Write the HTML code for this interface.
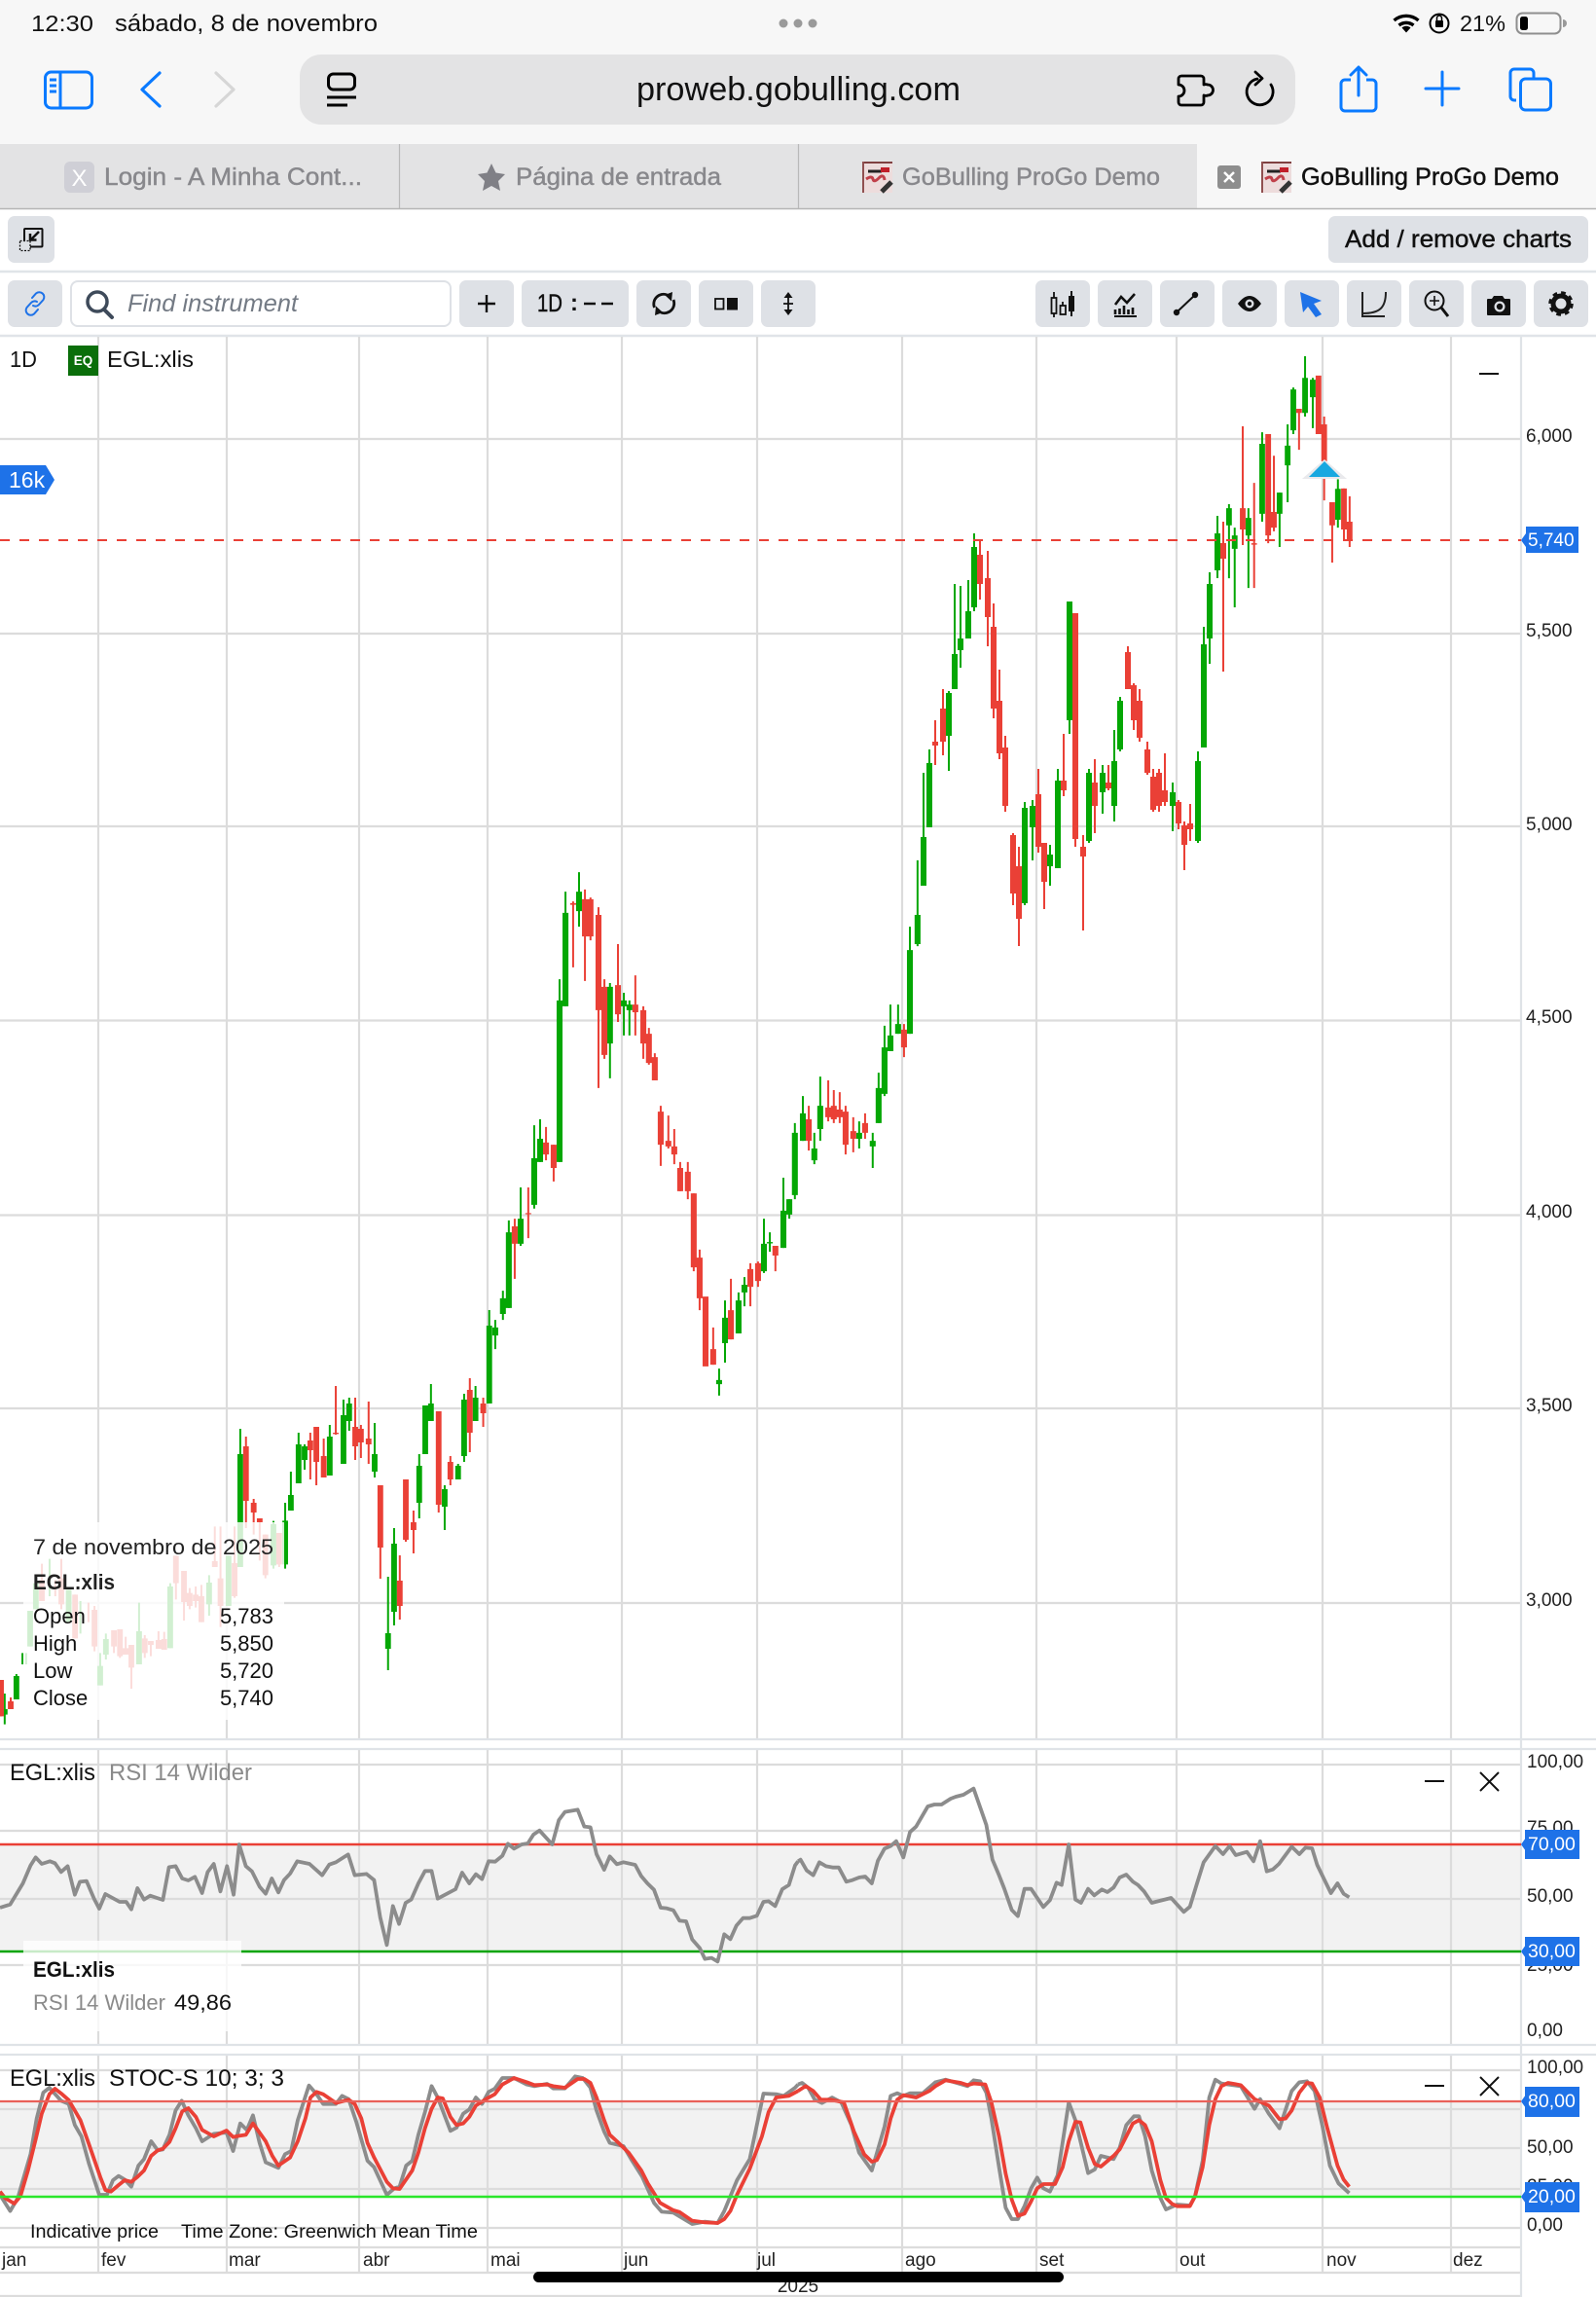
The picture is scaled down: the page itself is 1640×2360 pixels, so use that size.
<!DOCTYPE html>
<html lang="pt"><head><meta charset="utf-8"><title>GoBulling ProGo Demo</title>
<style>
html,body{margin:0;padding:0;background:#fff;width:1640px;height:2360px;overflow:hidden}
svg{display:block}
text{font-family:"Liberation Sans",sans-serif;fill:#111}
.ax{font-size:19px;fill:#222}
.tb{fill:none;stroke:#0a7aff;stroke-width:3}
.g{fill:none;stroke:#04a704}
.r{fill:none;stroke:#ea4036}
.pl{fill:none;stroke-linejoin:round;vector-effect:non-scaling-stroke}
.tab{font-size:25px;fill:#88888c;stroke:#88888c;stroke-width:.45}
.btn{fill:#dee1e6}
</style></head><body>
<svg width="1640" height="2360" viewBox="0 0 1640 2360" xmlns="http://www.w3.org/2000/svg">
<rect width="1640" height="2360" fill="#fff"/>
<!-- browser chrome -->
<rect width="1640" height="214" fill="#f7f7f7"/>
<text x="32" y="32" font-size="23" textLength="64" lengthAdjust="spacingAndGlyphs">12:30</text>
<text x="118" y="32" font-size="24" textLength="270" lengthAdjust="spacingAndGlyphs">sábado, 8 de novembro</text>
<circle cx="805" cy="24" r="4.5" fill="#9a9a9a"/><circle cx="820" cy="24" r="4.5" fill="#9a9a9a"/><circle cx="835" cy="24" r="4.5" fill="#9a9a9a"/>
<g fill="none" stroke="#000" stroke-width="3.4"><path d="M1432.5 21a19 19 0 0 1 25 0"/><path d="M1437.5 26a12 12 0 0 1 15 0"/></g><path d="M1440.500 28.500a6.500 6.500 0 0 1 9 0L1445 33.500z" fill="#000"/>
<circle cx="1479" cy="24" r="9.500" fill="none" stroke="#000" stroke-width="2"/><rect x="1475" y="21" width="8" height="7" rx="1" fill="#000"/><path d="M1476.500 21v-2.500a2.500 2.500 0 0 1 5 0V21" fill="none" stroke="#000" stroke-width="1.500"/>
<text x="1500" y="32" font-size="23" textLength="47" lengthAdjust="spacingAndGlyphs">21%</text>
<rect x="1558.500" y="13.500" width="45" height="21" rx="6" fill="none" stroke="#8f8f8f" stroke-width="2"/><rect x="1562" y="17" width="8" height="14" rx="2.500" fill="#000"/><path d="M1606 20a4 4 0 0 1 0 8z" fill="#999"/>

<rect x="308" y="56" width="1023" height="72" rx="22" fill="#e3e3e4"/>
<!-- sidebar, back, forward -->
<rect x="46.500" y="74" width="48" height="37" rx="6" class="tb"/><path d="M62 74v37M51 82h7M51 88h7M51 94h7" class="tb" stroke-width="2.500"/>
<path d="M164 75l-18 17 18 17" fill="none" stroke="#0a7aff" stroke-width="3.200" stroke-linecap="round" stroke-linejoin="round"/>
<path d="M222 75l18 17-18 17" fill="none" stroke="#d6d6d6" stroke-width="3.200" stroke-linecap="round" stroke-linejoin="round"/>
<rect x="337.500" y="76" width="27" height="16" rx="5" fill="none" stroke="#000" stroke-width="3"/><path d="M336 100h30M336 108h21" stroke="#000" stroke-width="3" fill="none"/>
<text x="654" y="103" font-size="34" textLength="333" lengthAdjust="spacingAndGlyphs">proweb.gobulling.com</text>
<path d="M1214 78h20a3 3 0 0 1 3 3v6a6 6 0 0 1 4 0a5.500 5.500 0 0 1 0 11a6 6 0 0 1-4 0v7a3 3 0 0 1-3 3h-20a3 3 0 0 1-3-3v-6a5.500 5.500 0 1 0 0-12v-6a3 3 0 0 1 3-3z" fill="none" stroke="#000" stroke-width="2.800" stroke-linejoin="round"/>
<path d="M1292 81a13.500 13.500 0 1 0 14 6" fill="none" stroke="#000" stroke-width="2.800" stroke-linecap="round"/><path d="M1290 74l7 6.500-7 6.500" fill="none" stroke="#000" stroke-width="2.800" stroke-linecap="round" stroke-linejoin="round"/>
<path d="M1388 82h-6a4 4 0 0 0-4 4v24a4 4 0 0 0 4 4h28a4 4 0 0 0 4-4V86a4 4 0 0 0-4-4h-6" class="tb"/><path d="M1396 98V70M1388 77l8-8 8 8" class="tb" stroke-linecap="round" stroke-linejoin="round"/>
<path d="M1465 91h34M1482 74v34" class="tb" stroke-linecap="round"/>
<path d="M1558 103h-2a4 4 0 0 1-4-4V75a4 4 0 0 1 4-4h16a4 4 0 0 1 4 4v5" class="tb"/><rect x="1562.500" y="81" width="31" height="32" rx="5" class="tb"/>
<!-- tabs -->
<rect x="0" y="148" width="1230" height="66" fill="#e3e3e4"/>
<path d="M0 214.500H1640" stroke="#b5b5b5" stroke-width="1.500"/><path d="M410.500 148v66M820.500 148v66" stroke="#b9b9b9" stroke-width="1.200"/>
<rect x="66" y="166" width="31" height="32" rx="6" fill="#cfcfd6"/><text x="81.500" y="191" font-size="24" text-anchor="middle" style="fill:#fff">X</text>
<text x="107" y="190" class="tab" textLength="265" lengthAdjust="spacingAndGlyphs">Login - A Minha Cont...</text>
<path d="M505 168l4.500 9.500 9.500 1.500-7 7 2 10-9-5-9 5 2-10-7-7 9.500-1.500z" fill="#808086"/>
<text x="530" y="190" class="tab" textLength="211" lengthAdjust="spacingAndGlyphs">Página de entrada</text>
<rect x="886" y="166" width="31" height="32" fill="#eddcdc"/><rect x="886" y="166" width="31" height="2" fill="#804040"/><rect x="886" y="166" width="2" height="32" fill="#905050"/><path d="M892 176h14" stroke="#222" stroke-width="3"/><path d="M905 172h9v5h-9z" fill="#c01f2a"/><path d="M890 184q6-4 7 0t6-1 6 2" stroke="#c0404a" stroke-width="3" fill="none"/><path d="M906 197l10-10" stroke="#333" stroke-width="5"/>
<text x="927" y="190" class="tab" textLength="265" lengthAdjust="spacingAndGlyphs">GoBulling ProGo Demo</text>
<rect x="1251" y="170" width="24" height="24" rx="3" fill="#8e8e8e"/><path d="M1258 177l10 10M1268 177l-10 10" stroke="#fff" stroke-width="2.500"/>
<rect x="1296" y="166" width="31" height="32" fill="#eddcdc"/><rect x="1296" y="166" width="31" height="2" fill="#804040"/><rect x="1296" y="166" width="2" height="32" fill="#905050"/><path d="M1302 176h14" stroke="#222" stroke-width="3"/><path d="M1315 172h9v5h-9z" fill="#c01f2a"/><path d="M1300 184q6-4 7 0t6-1 6 2" stroke="#c0404a" stroke-width="3" fill="none"/><path d="M1316 197l10-10" stroke="#333" stroke-width="5"/>
<text x="1337" y="190" font-size="25" stroke="#111" stroke-width=".45" textLength="265" lengthAdjust="spacingAndGlyphs">GoBulling ProGo Demo</text>

<!-- page row -->
<rect x="8" y="222" width="48" height="48" rx="7" class="btn"/>
<rect x="25" y="235" width="18.500" height="18.500" rx="1" fill="none" stroke="#111" stroke-width="2"/><path d="M40 238l-8 8M31 240v6.500h6.500" fill="none" stroke="#111" stroke-width="2.500"/>
<rect x="20.500" y="247.500" width="10.500" height="10" fill="#dee1e6" stroke="#111" stroke-width="1.300" stroke-dasharray="2 1.500"/>
<rect x="1365" y="222" width="267" height="48" rx="7" class="btn"/>
<text x="1382" y="254" font-size="25" stroke="#111" stroke-width=".45" textLength="233" lengthAdjust="spacingAndGlyphs">Add / remove charts</text>
<path d="M0 279H1640M0 345H1640" stroke="#e0e4e8" stroke-width="2.500"/>
<!-- toolbar -->
<rect x="8" y="288" width="56" height="48" rx="7" class="btn"/>
<rect x="73" y="289" width="390" height="46" rx="7" fill="#fff" stroke="#dee1e6" stroke-width="2"/>
<rect x="472" y="288" width="56" height="48" rx="7" class="btn"/>
<rect x="536" y="288" width="110" height="48" rx="7" class="btn"/>
<rect x="654" y="288" width="56" height="48" rx="7" class="btn"/>
<rect x="718" y="288" width="56" height="48" rx="7" class="btn"/>
<rect x="782" y="288" width="56" height="48" rx="7" class="btn"/>
<rect x="1064" y="288" width="56" height="48" rx="7" class="btn"/><rect x="1128" y="288" width="56" height="48" rx="7" class="btn"/><rect x="1192" y="288" width="56" height="48" rx="7" class="btn"/><rect x="1256" y="288" width="56" height="48" rx="7" class="btn"/><rect x="1320" y="288" width="56" height="48" rx="7" class="btn"/><rect x="1384" y="288" width="56" height="48" rx="7" class="btn"/><rect x="1448" y="288" width="56" height="48" rx="7" class="btn"/><rect x="1512" y="288" width="56" height="48" rx="7" class="btn"/><rect x="1576" y="288" width="56" height="48" rx="7" class="btn"/>
<!-- link -->
<g fill="none" stroke="#1e72e8" stroke-width="2" stroke-linecap="round"><path d="M33 306l4-4.500a5 5 0 0 1 7.500 6.500l-4.500 5a5 5 0 0 1-6 1"/><path d="M39 318l-4 4.500a5 5 0 0 1-7.500-6.500l4.500-5a5 5 0 0 1 6-1"/></g>
<circle cx="100" cy="310" r="10" fill="none" stroke="#3e4a5a" stroke-width="3.500"/><path d="M107 318l8 8" stroke="#3e4a5a" stroke-width="4" stroke-linecap="round"/>
<text x="131" y="320" font-size="25" font-style="italic" style="fill:#737a84" textLength="175" lengthAdjust="spacingAndGlyphs">Find instrument</text>
<path d="M500 303v18M491 312h18" stroke="#111" stroke-width="2.400"/>
<text x="552" y="320" font-size="25" stroke="#111" stroke-width=".5" textLength="26" lengthAdjust="spacingAndGlyphs">1D</text>
<text x="586" y="319" font-size="24" font-weight="bold">:</text><path d="M600 312h12M618 312h12" stroke="#111" stroke-width="2.600"/>
<g fill="none" stroke="#111" stroke-width="2.800"><path d="M672.500 316a10 10 0 0 1 13-13"/><path d="M692 308a10 10 0 0 1-13 13"/></g><path d="M691 300l-1 9.500-7-6.500zM673 324l1-9.500 7 6.500z" fill="#111"/>
<rect x="735" y="307" width="8.500" height="10.500" fill="none" stroke="#111" stroke-width="1.800"/><rect x="747" y="306" width="11" height="12.500" fill="#111"/>
<path d="M810 300l4.500 6h-9zM810 324l4.500-6h-9z" fill="#111"/><path d="M810 305v14M805 312h10" stroke="#111" stroke-width="1.800"/>
<!-- right icons -->
<g fill="none" stroke="#111" stroke-width="1.800"><path d="M1083 300v6M1083 322v4M1092 310v4"/><rect x="1080.500" y="306" width="5" height="16"/><rect x="1089.500" y="314" width="5.500" height="9"/></g><path d="M1101 299v5M1101 320v5" stroke="#111" stroke-width="2"/><rect x="1098" y="304" width="6" height="16" fill="#111"/>
<path d="M1146 313l6-8 6 6 8-9" fill="none" stroke="#111" stroke-width="2.600"/><path d="M1146 323v-5M1150.500 323v-6M1155 323v-9M1159.500 323v-5M1164 323v-7" stroke="#111" stroke-width="2.600"/><path d="M1145 325h23" stroke="#111" stroke-width="2"/>
<path d="M1210 320l18-17" stroke="#111" stroke-width="2"/><circle cx="1209" cy="321" r="3.200" fill="#111"/><circle cx="1228" cy="303" r="3.200" fill="#111"/>
<path d="M1272 312q12-16 24 0q-12 16-24 0z" fill="#111"/><circle cx="1284" cy="312" r="4.500" fill="#dee1e6"/><circle cx="1284" cy="312" r="2.200" fill="#111"/>
<path d="M1336 300l22 9-8 3 8 11-6 3-8-11-5 6z" fill="#1e72e8"/>
<path d="M1400 300v25h23M1424 300c0 16-6 22-24 22" fill="none" stroke="#222" stroke-width="2"/>
<circle cx="1474" cy="309" r="9.500" fill="none" stroke="#111" stroke-width="2"/><path d="M1474 304v10M1469 309h10" stroke="#111" stroke-width="1.600"/><path d="M1481 316l7 9" stroke="#111" stroke-width="3"/>
<path d="M1529 307h4l2-3h9l2 3h5a1 1 0 0 1 1 1v15a1 1 0 0 1-1 1h-22a1 1 0 0 1-1-1v-15a1 1 0 0 1 1-1z" fill="#111"/><circle cx="1541" cy="315" r="5.500" fill="#dee1e6"/><circle cx="1541" cy="315" r="3.200" fill="#111"/>
<circle cx="1604" cy="312" r="8" fill="none" stroke="#111" stroke-width="5"/><circle cx="1604" cy="312" r="11" fill="none" stroke="#111" stroke-width="3.500" stroke-dasharray="4.600 4"/>

<!-- grid bands -->
<rect x="0" y="1895" width="1563" height="110" fill="#f2f2f2"/>
<rect x="0" y="2159" width="1563" height="98" fill="#f2f2f2"/>
<path fill="none" stroke="#dcdcdc" stroke-width="2.200" d="M0 451H1563M0 651H1563M0 849H1563M0 1048.500H1563M0 1248.500H1563M0 1447H1563M0 1647H1563M0 1813H1563M0 1881H1563M0 1951H1563M0 2019H1563M0 2127H1563M0 2167H1563M0 2207H1563M0 2249H1563M0 2289H1563M0 2309H1563M0 2335H1563M0 2359H1563"/>
<path fill="none" stroke="#dcdcdc" stroke-width="2.200" d="M101 346V1787M233 346V1787M369 346V1787M501 346V1787M639 346V1787M778 346V1787M927 346V1787M1065 346V1787M1209 346V1787M1359 346V1787M1491 346V1787M101 1797V2101M233 1797V2101M369 1797V2101M501 1797V2101M639 1797V2101M778 1797V2101M927 1797V2101M1065 1797V2101M1209 1797V2101M1359 1797V2101M1491 1797V2101M101 2111V2335M233 2111V2335M369 2111V2335M501 2111V2335M639 2111V2335M778 2111V2335M927 2111V2335M1065 2111V2335M1209 2111V2335M1359 2111V2335M1491 2111V2335"/>
<path fill="none" stroke="#dfe3e7" stroke-width="2.200" d="M1563 346V2360M0 1787H1640M0 1797H1640M0 2101H1640M0 2111H1640"/>

<!-- candles: lower-left section -->
<g transform="translate(0,1400) scale(.34435,.33333)">
<path class="g" stroke-width="5.800" d="M14 1020V1115M49 960V1038M67 895V930M78 895V930M90 765V875M107 680V760M148 605V720M205 700V800M240 735V835M299 895V995M316 835V915M415 740V930M508 680V880M624 655V780M682 595V750M717 204V630M816 488V635M851 432V635M868 336V432M891 216V372M909 252V330M984 192V348M1025 114V312M1042 108V210M1118 186V354M1158 660V948M1176 510V810M1251 282V480M1269 132V282M1286 66V180M1327 378V516M1367 312V360M1385 96V306M1419 72V180M1460 -162V126"/>
<path class="g" stroke-width="17" d="M14 1068V1085M49 966V1038M90 765V875M107 680V760M205 700V800M299 935V995M316 852V900M415 828V930M508 690V880M624 678V745M682 595V750M717 282V630M816 498V625M851 487V622M868 408V456M891 252V372M909 258V300M984 228V348M1025 162V312M1042 126V180M1118 282V336M1158 834V882M1176 558V768M1251 318V432M1269 132V282M1286 126V180M1327 390V444M1367 318V360M1385 114V288M1419 108V180M1460 -114V126"/>
<path class="r" stroke-width="5.800" d="M3 978V1090M32 1032V1068M125 620V735M165 670V720M183 605V760M224 715V850M264 740V800M282 750V890M340 825V895M358 822V910M375 845V900M392 870V1005M432 840V910M450 858V905M473 828V880M490 830V885M525 595V730M549 642V795M566 695V760M584 690V755M601 685V800M641 505V630M658 505V815M700 505V725M734 228V510M757 420V530M775 480V610M792 530V665M833 525V630M926 216V360M944 198V378M966 234V354M1002 72V222M1060 108V300M1077 192V294M1100 120V312M1135 378V666M1193 594V792M1211 360V552M1234 456V588M1309 150V462M1344 288V378M1402 48V276M1442 108V198"/>
<path class="r" stroke-width="17" d="M3 978V1090M32 1044V1068M125 670V735M183 665V745M224 715V850M282 762V875M340 825V875M358 822V905M375 880V900M392 870V940M432 850V895M450 858V870M473 855V882M490 852V885M525 595V680M549 642V738M566 710V750M584 715V735M601 720V800M641 612V630M658 665V750M700 618V720M734 258V426M757 432V462M775 480V492M792 530V655M833 525V622M926 240V270M944 198V306M966 288V354M1002 216V220M1060 198V258M1077 204V246M1100 234V252M1135 378V570M1193 672V750M1211 360V546M1234 492V516M1309 150V438M1344 306V360M1402 84V216M1442 126V156"/>
</g>
<g transform="translate(0,880) scale(.35714)">
<path class="g" stroke-width="5.600" d="M1425 1333V1417M1447 1249V1333M1464 1047V1299M1498 952V1120"/>
<path class="g" stroke-width="17" d="M1425 1355V1378M1447 1271V1316M1464 1081V1299M1498 1042V1114"/>
<path class="r" stroke-width="5.600" d="M1481 1042V1215"/><path class="r" stroke-width="17" d="M1481 1064V1114"/>
</g>
<!-- candles: middle section -->
<g transform="translate(540,880) scale(.35714)">
<path class="g" stroke-width="5.600" d="M25 773V1013M42 756V879M98 353V879M115 101V431M154 45V202M243 364V638M283 392V515M299 414V515M557 1473V1551M574 1277V1456M613 1254V1372M630 1210V1294M686 1042V1198M703 1081V1137M742 924V1126M759 986V1042M775 767V986M798 689V818M831 795V885M848 633V818M960 762V840M999 795V896M1016 622V767M1033 487V689M1050 426V560M1072 426V510M1106 202V510M1128 11V258"/>
<path class="g" stroke-width="17" d="M25 868V1002M42 812V879M98 414V879M115 162V431M154 101V157M243 375V538M283 414V431M299 426V442M557 1506V1518M574 1327V1400M613 1277V1372M630 1232V1254M686 1114V1193M703 1109V1113M742 1019V1126M759 986V1030M775 795V974M798 739V818M831 840V874M848 717V784M960 795V812M999 818V834M1016 666V767M1033 549V683M1050 515V560M1072 482V510M1106 269V510M1128 168V252"/>
<path class="r" stroke-width="5.600" d="M8 952V1098M59 778V874M81 829V935M137 129V319M171 95V358M187 118V241M210 146V666M227 353V582M266 252V476M316 342V515M339 431V582M355 493V599M372 566V644M389 717V890M411 745V840M428 784V885M445 879V963M467 879V986M484 969V1193M501 1131V1305M540 1355V1462M591 1215V1389M647 1170V1294M669 1165V1238M719 1120V1193M815 717V846M871 644V762M887 672V767M904 678V767M921 717V857M943 750V851M977 739V812M1089 482V577"/>
<path class="r" stroke-width="17" d="M8 1026V1029M59 823V857M81 829V896M137 134V139M171 123V230M187 123V230M210 168V442M227 375V571M266 370V454M316 426V448M339 442V538M355 510V594M372 577V644M389 734V829M411 818V834M428 834V857M445 896V963M467 907V963M484 969V1182M501 1154V1271M518 1266V1467M540 1417V1462M591 1305V1389M647 1187V1238M669 1170V1221M719 1120V1148M815 756V818M871 722V750M887 717V756M904 728V750M921 734V829M943 790V812M977 767V795M1089 498V549"/>
</g>
<!-- candles: upper right section -->
<g transform="translate(940,530) scale(.33333)">
<path class="g" stroke-width="6" d="M27 792V1140M45 720V960M105 540V786M123 210V534M141 216V468M165 198V378M183 54V294M339 882V1200M363 876V1062M417 1014V1140M441 780V1086M477 264V672M537 780V1008M579 768V918M615 660V942M633 558V726M795 822V972M873 726V1008M891 342V714M909 174V456M933 0V192"/>
<path class="g" stroke-width="18" d="M27 990V1140M45 762V960M105 546V678M123 426V534M141 378V414M165 294V378M183 96V282M339 900V1194M363 894V960M417 1044V1080M441 816V1086M477 264V630M537 792V1002M579 792V852M615 756V894M633 570V720M795 852V894M873 756V1002M891 396V714M909 210V378M933 54V168"/>
<path class="r" stroke-width="6" d="M63 630V768M87 534V738M201 78V258M225 108V402M243 270V624M261 474V750M279 678V912M303 978V1200M321 1020V1326M381 780V1038M399 1008V1212M459 672V864M495 300V1020M519 984V1278M555 750V978M597 768V846M657 402V534M675 516V660M693 534V696M717 696V798M735 780V912M753 780V912M771 732V894M813 876V966M831 942V1092M849 888V1002M951 18V480"/>
<path class="r" stroke-width="18" d="M63 696V708M87 594V696M201 120V210M225 192V312M243 342V594M261 570V732M279 714V894M303 984V1164M321 1080V1242M381 858V1020M399 1008V1128M459 816V846M495 300V996M519 1020V1050M555 822V894M597 822V840M657 420V534M675 522V630M693 570V684M717 720V792M735 804V906M753 792V894M771 846V882M813 882V948M831 954V1014M849 948V966M951 84V132"/>
</g>
<g transform="translate(1100,340) scale(.34435,.3827)">
<path class="g" stroke-width="5.800" d="M473 465V664M490 528V742M531 476V690M572 272V512M624 434V580M648 251V460M665 152V277M700 68V230M723 126V261M798 398V528"/>
<path class="g" stroke-width="17" d="M473 476V522M490 549V585M531 502V549M572 303V491M624 434V491M648 308V361M665 157V267M700 126V220M723 131V178M798 424V507"/>
<path class="r" stroke-width="5.800" d="M514 256V575M548 408V690M590 277V570M607 335V538M682 209V319M757 230V455M781 460V622M816 423V564M833 444V580"/>
<path class="r" stroke-width="17" d="M514 476V533M548 570V574M590 277V549M607 486V528M682 209V220M740 120V277M757 251V350M781 460V522M816 423V533M833 512V564"/>
</g>
<!-- price line -->
<path d="M0 555H1563" stroke="#ea4036" stroke-width="2" stroke-dasharray="10 10"/>
<path d="M1361 472L1384 492H1338z" fill="#e9e9ec"/><path d="M1361 474L1377 490H1345z" fill="#18a8e0"/>

<!-- main labels -->
<text x="10" y="377" font-size="23" textLength="28" lengthAdjust="spacingAndGlyphs">1D</text>
<rect x="70" y="355" width="31" height="31" fill="#0a6e0a"/><text x="85.500" y="375" font-size="13.500" font-weight="bold" text-anchor="middle" style="fill:#fff">EQ</text>
<text x="110" y="377" font-size="23" textLength="89" lengthAdjust="spacingAndGlyphs">EGL:xlis</text>
<path d="M1520 384h20" stroke="#111" stroke-width="2"/>
<path d="M0 478H47L56 493L47 508H0z" fill="#1e72e8"/><text x="9" y="501" font-size="23" style="fill:#fff">16k</text>
<text x="1568" y="454" class="ax">6,000</text><text x="1568" y="654" class="ax">5,500</text><text x="1568" y="853" class="ax">5,000</text><text x="1568" y="1051" class="ax">4,500</text><text x="1568" y="1251" class="ax">4,000</text><text x="1568" y="1450" class="ax">3,500</text><text x="1568" y="1650" class="ax">3,000</text>
<path d="M1563 555l5-7v14z" fill="#1e72e8"/><rect x="1568" y="541" width="54" height="27" fill="#1e72e8"/><text x="1570" y="561" font-size="19" style="fill:#fff">5,740</text>

<!-- info overlay -->
<rect x="24" y="1564" width="268" height="203" fill="#fff" fill-opacity=".82"/>
<text x="34" y="1597" font-size="22" style="fill:#222" textLength="247" lengthAdjust="spacingAndGlyphs">7 de novembro de 2025</text>
<text x="34" y="1633" font-size="22" font-weight="bold" style="fill:#222" textLength="84" lengthAdjust="spacingAndGlyphs">EGL:xlis</text>
<g font-size="22" style="fill:#222"><text x="34" y="1668">Open</text><text x="34" y="1696">High</text><text x="34" y="1724">Low</text><text x="34" y="1752">Close</text>
<text x="281" y="1668" text-anchor="end">5,783</text><text x="281" y="1696" text-anchor="end">5,850</text><text x="281" y="1724" text-anchor="end">5,720</text><text x="281" y="1752" text-anchor="end">5,740</text></g>

<!-- RSI panel -->
<path d="M0 1895H1563" stroke="#ea4036" stroke-width="2.500"/><path d="M0 2005H1563" stroke="#07a507" stroke-width="2.500"/>
<g transform="translate(0,1780) scale(.523,.33333)"><polyline class="pl" stroke="#8c8c8c" stroke-width="3.800" points="0,540 20,530 45,465 60,410 70,385 82,405 98,397 108,403 120,430 133,412 147,500 157,460 170,458 185,513 195,543 207,498 235,522 248,522 258,545 270,480 283,515 295,503 320,516 332,415 345,412 358,450 370,456 383,445 397,495 408,430 420,405 433,490 446,412 459,500 470,345 483,412 495,428 510,475 522,497 534,450 547,493 558,455 570,435 584,397 608,405 633,440 647,407 660,400 684,376 697,440 720,436 735,455 747,570 760,655 772,535 784,590 797,525 808,515 822,465 835,427 848,427 860,512 895,483 908,432 922,465 935,437 947,452 960,397 973,398 987,380 998,343 1010,358 1025,345 1037,342 1048,315 1060,302 1085,345 1098,270 1110,245 1135,238 1148,290 1160,292 1172,375 1187,423 1198,382 1212,406 1225,400 1248,408 1260,443 1272,465 1285,485 1298,540 1310,542 1323,548 1335,580 1348,582 1360,638 1375,665 1385,698 1398,695 1410,706 1423,622 1435,637 1447,595 1460,572 1473,572 1487,565 1500,522 1510,520 1523,535 1537,483 1550,470 1562,410 1568,397"/></g>
<g transform="translate(820,1780) scale(.523,.33333)"><polyline class="pl" stroke="#8c8c8c" stroke-width="3.800" points="0,397 5,392 17,425 30,440 42,400 55,412 68,416 80,416 95,460 107,455 120,447 132,444 145,465 157,395 170,358 182,350 193,335 207,385 220,307 232,290 255,228 268,222 282,222 300,204 310,198 325,192 345,173 360,240 370,285 382,392 395,440 405,480 420,547 432,566 445,482 458,482 482,538 495,517 508,463 518,470 532,345 545,515 556,525 570,482 582,502 597,484 608,492 620,478 632,447 645,438 658,460 668,470 680,490 695,525 733,510 758,553 770,537 783,470 797,400 820,350 835,375 848,350 860,378 882,368 895,397 908,335 921,428 933,422 945,405 970,352 985,375 997,355 1010,357 1020,408 1033,450 1047,495 1060,465 1072,497 1083,508"/></g>
<text x="10" y="1829" font-size="24" textLength="88" lengthAdjust="spacingAndGlyphs">EGL:xlis</text>
<text x="112" y="1829" font-size="24" style="fill:#8a8a8a" textLength="147" lengthAdjust="spacingAndGlyphs">RSI 14 Wilder</text>
<path d="M1464 1830h20" stroke="#111" stroke-width="2"/><path d="M1521 1821l19 19M1540 1821l-19 19" stroke="#111" stroke-width="2"/>
<rect x="24" y="1994" width="224" height="93" fill="#fff" fill-opacity=".78"/>
<text x="34" y="2031" font-size="22" font-weight="bold" textLength="84" lengthAdjust="spacingAndGlyphs">EGL:xlis</text>
<text x="34" y="2065" font-size="22" style="fill:#8a8a8a" textLength="136" lengthAdjust="spacingAndGlyphs">RSI 14 Wilder</text>
<text x="179" y="2065" font-size="22" textLength="59" lengthAdjust="spacingAndGlyphs">49,86</text>
<text x="1569" y="1816" class="ax">100,00</text><text x="1569" y="1884" class="ax">75,00</text><text x="1569" y="1954" class="ax">50,00</text><text x="1569" y="2025" class="ax">25,00</text><text x="1569" y="2092" class="ax">0,00</text>
<path d="M1563 1895l5-7v14z" fill="#1e72e8"/><rect x="1567" y="1880" width="56" height="30" fill="#1e72e8"/><text x="1570" y="1901" font-size="19.500" style="fill:#fff">70,00</text>
<path d="M1563 2005l5-7v14z" fill="#1e72e8"/><rect x="1567" y="1990" width="56" height="30" fill="#1e72e8"/><text x="1570" y="2011" font-size="19.500" style="fill:#fff">30,00</text>

<!-- STOCH panel -->
<g transform="translate(0,2080) scale(.523,.33333)"><polyline class="pl" stroke="#8c8c8c" stroke-width="3.800" points="0,525 20,575 35,535 45,480 60,400 72,290 85,210 97,195 120,235 135,245 147,310 160,345 175,430 195,525 210,525 222,480 233,467 245,478 258,500 272,435 283,415 297,360 310,388 320,385 333,340 345,265 357,235 370,280 385,320 397,360 420,337 445,333 458,390 472,305 485,325 497,280 510,365 522,425 547,442 560,400 572,390 585,295 607,188 622,215 635,245 660,245 672,220 685,230 700,300 722,420 735,440 760,525 775,505 785,500 798,435 810,420 822,340 835,270 848,190 860,225 885,328 897,318 910,275 922,262 935,225 947,245 960,208 972,198 987,165 1010,165 1035,185 1050,190 1075,183 1087,197 1110,197 1130,160 1145,165 1160,195 1172,265 1187,330 1198,365 1225,375 1240,415 1262,470 1285,550 1300,577 1323,580 1360,615 1385,608 1410,612 1423,575 1448,480 1473,415 1500,213 1525,215 1540,220 1562,195 1568,185"/></g>
<g transform="translate(820,2080) scale(.523,.33333)"><polyline class="pl" stroke="#8c8c8c" stroke-width="3.800" points="0,185 8,180 20,195 33,232 47,242 67,225 85,240 105,310 120,395 145,450 170,315 182,220 195,212 207,220 220,212 245,212 270,178 290,170 333,190 345,172 358,175 370,210 380,290 395,440 408,565 420,600 432,600 445,560 458,505 470,472 482,505 495,515 510,465 532,240 545,295 570,458 583,447 595,405 620,415 632,380 645,310 660,283 670,283 682,345 695,450 712,535 723,570 745,555 770,558 780,530 795,420 808,225 820,170 832,182 845,185 870,190 897,260 908,230 925,275 946,320 970,205 985,178 1000,175 1015,205 1030,310 1045,435 1062,490 1083,520"/></g>
<g transform="translate(0,2080) scale(.523,.33333)"><polyline class="pl" stroke="#ea4036" stroke-width="3.800" points="0,515 10,535 28,552 40,530 55,450 70,355 82,275 97,215 108,198 122,215 135,233 158,295 175,370 197,470 207,510 218,515 233,495 245,480 258,485 270,470 283,450 297,405 310,388 320,383 333,362 345,320 358,268 370,258 385,285 397,325 420,345 445,327 458,347 470,343 483,340 497,305 522,360 535,405 547,435 570,410 585,360 600,290 610,225 622,208 635,215 660,242 685,232 697,245 710,290 722,365 735,410 760,485 772,505 785,507 810,450 822,395 835,320 848,260 860,225 870,228 885,285 897,310 910,305 922,285 935,250 958,227 972,215 987,185 1010,165 1035,178 1050,187 1075,185 1087,190 1110,195 1135,168 1148,168 1160,180 1172,225 1187,295 1198,340 1212,360 1235,395 1260,450 1273,490 1297,550 1322,572 1335,578 1360,605 1385,610 1410,612 1423,600 1435,575 1448,525 1473,445 1497,345 1510,270 1525,225 1550,220 1568,205"/></g>
<g transform="translate(820,2080) scale(.523,.33333)"><polyline class="pl" stroke="#ea4036" stroke-width="3.800" points="0,205 15,190 30,205 45,232 65,232 90,240 110,330 130,400 145,423 155,418 170,370 182,290 195,232 207,218 232,225 258,205 270,190 290,172 320,180 333,187 345,182 368,185 380,240 395,345 408,460 420,540 432,590 445,583 458,545 470,505 482,492 505,492 520,440 532,360 545,300 555,302 570,380 583,430 595,438 620,405 632,385 658,305 670,295 682,310 695,360 712,480 723,535 735,553 745,560 770,560 780,530 795,440 808,310 820,230 832,190 845,180 870,187 897,230 908,238 925,250 946,292 958,290 970,265 985,210 1000,180 1010,182 1025,225 1040,320 1060,435 1072,478 1083,500"/></g>
<path d="M0 2159H1563" stroke="#e9615a" stroke-width="2.200"/><path d="M0 2257H1563" stroke="#2ae62a" stroke-width="2.500"/>
<text x="10" y="2143" font-size="24" textLength="88" lengthAdjust="spacingAndGlyphs">EGL:xlis</text>
<text x="112" y="2143" font-size="24" textLength="180" lengthAdjust="spacingAndGlyphs">STOC-S 10; 3; 3</text>
<path d="M1464 2143h20" stroke="#111" stroke-width="2"/><path d="M1521 2134l19 19M1540 2134l-19 19" stroke="#111" stroke-width="2"/>
<text x="1569" y="2130" class="ax">100,00</text><text x="1569" y="2212" class="ax">50,00</text><text x="1569" y="2252" class="ax">25,00</text><text x="1569" y="2292" class="ax">0,00</text>
<path d="M1563 2159l5-7v14z" fill="#1e72e8"/><rect x="1567" y="2144" width="56" height="31" fill="#1e72e8"/><text x="1570" y="2165" font-size="19.500" style="fill:#fff">80,00</text>
<path d="M1563 2257l5-7v14z" fill="#1e72e8"/><rect x="1567" y="2242" width="56" height="31" fill="#1e72e8"/><text x="1570" y="2263" font-size="19.500" style="fill:#fff">20,00</text>

<text x="31" y="2299" font-size="19" textLength="132" lengthAdjust="spacingAndGlyphs">Indicative price</text>
<text x="186" y="2299" font-size="19" textLength="305" lengthAdjust="spacingAndGlyphs">Time Zone: Greenwich Mean Time</text>
<text x="2" y="2328" class="ax">jan</text><text x="104" y="2328" class="ax">fev</text><text x="235" y="2328" class="ax">mar</text><text x="373" y="2328" class="ax">abr</text><text x="504" y="2328" class="ax">mai</text><text x="641" y="2328" class="ax">jun</text><text x="778" y="2328" class="ax">jul</text><text x="930" y="2328" class="ax">ago</text><text x="1068" y="2328" class="ax">set</text><text x="1212" y="2328" class="ax">out</text><text x="1363" y="2328" class="ax">nov</text><text x="1493" y="2328" class="ax">dez</text>
<text x="820" y="2355" class="ax" text-anchor="middle">2025</text>
<rect x="548" y="2334" width="545" height="11" rx="5.500" fill="#000"/>
</svg>
</body></html>
